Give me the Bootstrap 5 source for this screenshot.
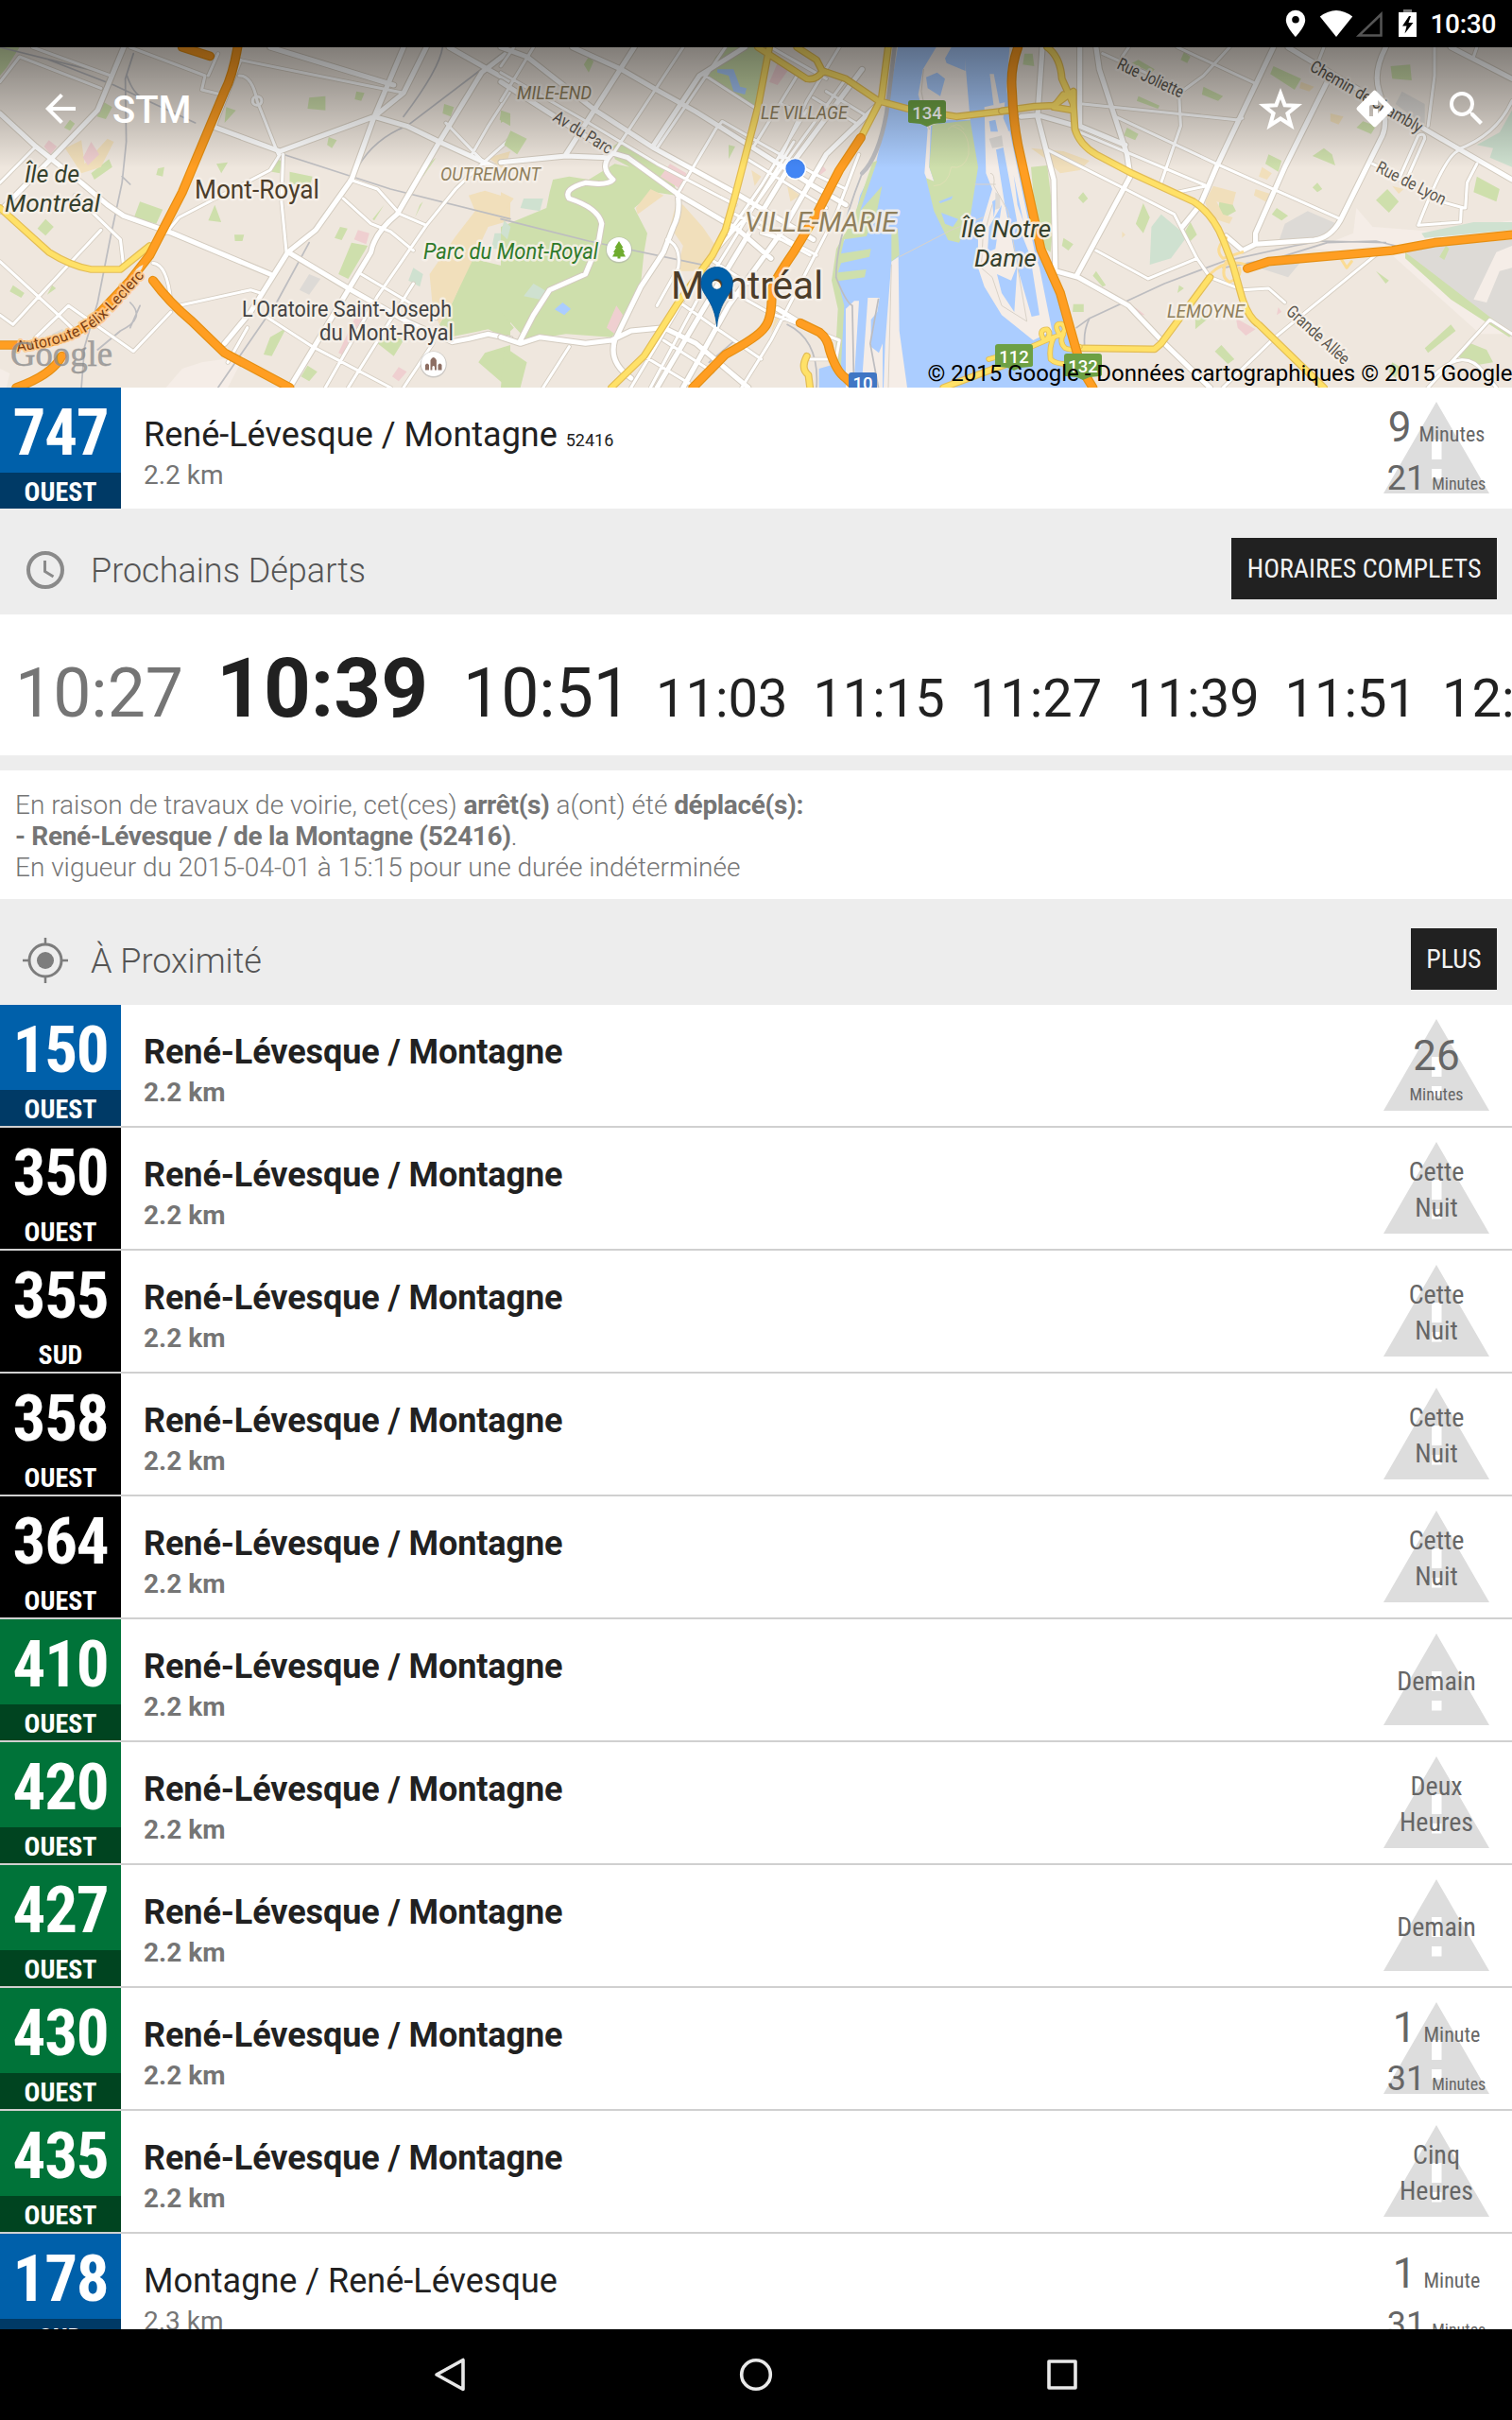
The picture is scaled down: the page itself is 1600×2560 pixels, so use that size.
<!DOCTYPE html>
<html lang="fr">
<head>
<meta charset="utf-8">
<meta name="viewport" content="width=device-width, initial-scale=1">
<title>STM</title>
<link href="https://cdn.jsdelivr.net/npm/bootstrap@5.3.0/dist/css/bootstrap.min.css" rel="stylesheet">
<style>
  body{font-family:Roboto,"Noto Sans",sans-serif;color:#212121;background:#fff;line-height:1}
  b{font-weight:700}
  .screen{width:1600px;height:2560px;overflow:hidden}
  .cond{font-family:"Roboto Condensed",Roboto,sans-serif;font-stretch:condensed}
  .statusbar{height:50px;background:#000;color:#fff;padding-right:17px}
  .clock{font-size:28px;font-weight:500;letter-spacing:-.3px;margin-left:13px;line-height:50px;padding-top:2px}
  .mapbox{height:360px}
  .mapbox>svg{display:block}
  .appbar{position:absolute;left:0;right:0;top:0;height:129px;padding-left:40px;padding-right:24px}
  .appbar h1{font-size:40px;font-weight:500;color:#fff;margin-left:31px;padding-top:5px}
  .fg{flex:1 1 0;min-height:0;overflow:hidden}
  .stop{height:128px}
  .nearby .stop{height:130px;border-bottom:2px solid #d0d0d0}
  .route{width:128px;height:128px;color:#fff;font-weight:700;text-align:center}
  .route .num{height:90px;font-size:69px;line-height:95px;letter-spacing:-1.200px}
  .route .dir{height:38px;font-size:28px;line-height:42px}
  .blue .num{background:#0060aa}.blue .dir{background:#003a66}
  .black .num,.black .dir{background:#000}
  .green .num{background:#007339}.green .dir{background:#004420}
  .stopname{font-size:36px;line-height:42px;height:42px;margin-top:29px}
  .fw-bold .stopname{letter-spacing:-.1px}
  .stopname small{font-size:18px;line-height:1}
  .dist{font-size:28px;line-height:33px;margin-top:5px;color:#757575}
  .eta{width:160px;height:128px;color:#666;text-align:center}
  .eta svg{position:absolute;left:24px;top:15px}
  .eta .txt{position:relative;height:128px;white-space:nowrap}
  .eta .ln{display:flex;justify-content:center;align-items:baseline}
  .big{font-size:44px}.mid{font-size:36px}.m22{font-size:22px}.m18{font-size:18px}.w28{font-size:28px;line-height:38px}
  .section{height:112px;background:#ededed;padding:15px 16px 0 24px}
  .section h2{font-size:36px;font-weight:300;color:#555;margin-left:24px;padding-top:6px}
  .section svg{position:relative;top:1px}
  .btn-dk{background:#212121;color:#f2f2f2;border-radius:0;border:0;font-size:28px;line-height:65px;height:65px;padding:0 16.500px}
  .times{height:149px;padding:35px 0 0 16px;white-space:nowrap;overflow:hidden}
  .times>div{flex:none}
  .t1{width:213px;font-size:71.500px;color:#757575}.t2{width:261px;font-size:87px;font-weight:700}
  .t3{width:204px;font-size:71.500px}.t4{width:166.400px;font-size:56px}
  .band{height:16px;background:#ededed}
  .notice{height:136px;padding:20px 16px;font-size:28px;line-height:33px;font-weight:300;color:#757575}
  .notice b{letter-spacing:-.35px}
  .navbtns{height:96px;background:#000;gap:276px}
  .land{fill:#f5ede7}.water{fill:#abcdff}.park{fill:#cedfac}.sand{fill:#f1dfbb}.teal{fill:#cfe1d0}.pink{fill:#efcfd0}.apt{fill:#dddad6}
  .net{fill:none;stroke-linejoin:round;stroke-linecap:round}
  .rail{stroke:#bdbdc0;stroke-width:5}
  .c1{stroke:#d6cec2;stroke-width:14}.f1{stroke:#fff;stroke-width:9}
  .c2{stroke:#d3cbbf;stroke-width:21}.f2{stroke:#fff;stroke-width:15}
  .cy{stroke:#e3bd55;stroke-width:23}.fy{stroke:#ffe168;stroke-width:16}
  .co{stroke:#e58f13;stroke-width:29}.fo{stroke:#ff9e22;stroke-width:22}
  .lab text{paint-order:stroke;stroke:#f7f1ea;stroke-opacity:.85;stroke-width:5px;stroke-linejoin:round}
  .it{font-style:italic}
  .dist-l{fill:#8f7f5c}.isl{fill:#35402c}.town{fill:#4c3d2a}.str{fill:#5c574e;font-size:18px}
</style>
</head>
<body>
<svg width="0" height="0" class="position-absolute"><symbol id="alert" viewBox="0 0 112 97"><path fill="#ddd" fill-rule="evenodd" d="M56 0L112 97H0ZM51 40V61H61.500V40ZM51 71V81.500H61.500V71Z"/></symbol></svg>
<div class="screen d-flex flex-column">
  <div class="statusbar d-flex justify-content-end align-items-center">
    <svg width="140" height="50" viewBox="1360 0 140 50" fill="#fff">
      <path fill-rule="evenodd" d="M1371 10.700a10.200 10.200 0 0 0-10.200 10.200c0 7.500 10.200 18 10.200 18s10.200-10.500 10.200-18A10.200 10.200 0 0 0 1371 10.700Zm0 6.300a3.800 3.800 0 1 1 0 7.600 3.800 3.800 0 0 1 0-7.600Z"/>
      <path d="M1396.800 17.500Q1414 4.500 1431.200 17.500L1414 39Z"/>
      <path fill="none" stroke="#555" stroke-width="2.500" d="M1438 37.500H1461.500V15Z"/>
      <path fill="#777" d="M1485 10h9v4h-9z"/><path d="M1480 13h19v26h-19z"/><path fill="#000" d="M1491 17L1484 27.500H1488.500L1486.500 35.500L1495.500 24H1490.500L1493 17Z"/>
    </svg>
    <div class="clock">10:30</div>
  </div>
  <div class="mapbox position-relative">
    <svg width="1600" height="360" viewBox="0 50 1600 360">
      <defs>
        <linearGradient id="shade" x1="0" y1="0" x2="0" y2="1"><stop offset="0" stop-color="#000" stop-opacity=".46"/><stop offset="1" stop-color="#000" stop-opacity="0"/></linearGradient>
        <path id="felix" d="M18 372Q82 364 110 338Q128 320 158 286"/>
        <g id="min1"><path d="M0 260L60 180L310 280M100 150L340 240M400 150L630 240L620 285L680 300M670 170L640 240M740 190L660 400M735 240Q775 240 790 320L855 490M735 190L1240 295M860 490L830 540L550 690L510 740M870 490L865 640L880 800M1075 570L1160 600L1230 680L1310 715M1055 630L1140 710L1200 735L1270 795M1568 440L1460 540L1400 600L1310 715L1160 940L1000 1230M1110 870L1340 1010M0 580L110 465M0 830L180 1000L230 1050M310 730L120 940L40 1030L0 1000M230 620L370 760L380 850M470 835Q515 840 525 960M550 970L770 920L800 930M110 1070L210 970L410 1115L525 990M810 1000L960 1100L1200 1230M1270 900L1070 1230M1330 1090L1240 1230M1370 390L1500 530M1568 290L1500 400L1450 490M700 1150L760 1040"/><circle cx="790" cy="320" r="14"/></g>
        <path id="maj1" d="M380 150L300 350L170 490L0 670M0 360L110 465L250 580L330 650L380 685L530 740L830 870M1240 150L1150 370L1080 570L970 730L885 800L770 990L690 1090M885 800L1070 915L1250 1020L1390 1085L1440 1075L1500 1060L1568 1075M1568 160L1480 230L1350 450L1220 680Q1150 740 1140 800L1070 920L960 1110L890 1230M650 400L860 480L1150 370L1250 400L1350 450L1520 530M1150 370L1240 295L1310 150M1380 150L1568 260M830 150L1210 270"/>
        <path id="yel1" d="M0 660L150 800Q220 845 280 855L370 855L460 780"/>
        <path id="ora1" d="M730 150Q715 240 690 290L560 610L460 810L400 890L300 1000Q220 1085 100 1095L0 1095M470 890Q520 960 590 1020L690 1120L890 1230M190 1130Q160 1190 50 1230M560 150L645 178"/>
        <path id="min2" d="M560 30L350 360M690 30L480 350M660 290L540 500M910 120L780 340M860 210L930 240M1060 130L760 560L640 700M1000 170L1120 245M960 190L1090 270M940 230L800 470L700 620M1100 370L1030 560L830 960L740 1110M660 290L680 265L790 330L960 430L1060 480M620 115L800 235M750 380L1000 540M720 560L950 690M700 800L820 870L1040 960L1030 1020H950M550 840L660 920L800 1020M500 960L650 1060M440 1010L600 1110M760 560L880 640L970 690M800 620L860 640M590 780L470 990L400 1110M900 330L620 800L460 1110M510 640Q555 660 545 730L480 850M210 980L130 1110M100 30L0 200M40 30L0 90M1040 30L940 200L860 380M0 110L270 270L480 400L720 530M830 30L1000 130M640 700L760 780"/>
        <path id="maj2" d="M0 30L80 60L290 230L470 350L700 480L830 560L960 640M0 140L340 365L390 380L550 500L730 610L830 700M220 30L370 100L470 160L600 235L700 300L960 470L1060 530M410 30L200 370M750 30L610 120L470 340M1110 100L880 420L640 830L480 1110M1150 220L1000 370L860 620L700 850L560 1110M0 395L200 375L330 380M340 370Q300 410 345 450Q330 470 260 460Q190 480 210 510Q300 540 310 590L300 650L260 750L150 800L100 880L60 960M0 950L60 970L120 950L260 970L340 960L400 930L500 920L600 970L760 1110M545 510Q550 560 530 600L500 680L430 790L350 960Q330 1030 400 1080M850 860L920 905"/>
        <path id="yel2" d="M825 30L790 220L720 500L690 610L650 690L545 840L440 1010L340 1110M790 30L940 130Q970 135 990 105L1060 130L1160 200M910 30L970 70L990 110M1190 30L1170 190L1110 310M1160 200L1250 225L1400 250L1568 230M1360 1110L1568 1030M940 1010Q920 1050 945 1070L950 1110"/>
        <path id="ora2" d="M1106 317L1040 420L970 560L900 680Q840 770 832 800Q835 890 810 920Q790 950 690 1005L590 1110M920 905L980 935Q1005 955 1010 990Q1030 1060 1060 1080L1100 1120"/>
        <path id="min3" d="M310 170L560 285L620 240L700 150M545 300L550 400L490 580M250 330L720 380L740 375M350 370L660 520L1040 695M540 150L780 265M240 420L400 490L630 590L540 610M140 475L380 600L530 680L600 820L640 880L740 920L820 915L870 960M290 795L450 885L600 820M1160 800L840 1070L680 1230M1400 480Q1360 500 1280 715L1410 705L1412 660L1425 660L1430 580L1460 520M1350 640L1420 660M1568 1060L1500 1015L1310 1230M1330 150V240L1310 400M1568 320Q1520 430 1400 475M1220 570L1280 430Q1300 420 1300 440L1240 580M990 150L975 190M390 150L370 180M1460 150L1450 180M1330 1190Q1420 1100 1480 1180L1520 1230M1140 520L1220 560"/>
        <path id="maj3" d="M240 150V400L380 460M290 150L300 220L385 490L395 560L230 875M125 150L110 370L160 570L165 860L235 880L390 970L500 1090L640 1230M835 150L660 530L610 650L555 720M1000 260L870 530L780 740V770M1180 150Q1140 230 1160 290Q1190 380 1170 430L1040 700Q1010 755 960 762L780 775L740 795L690 750M880 150L1300 410L1400 470L1568 570M1380 150L1568 250M60 370L110 365L230 400"/>
        <path id="yel3" d="M140 150Q180 180 185 250L220 330L225 410Q240 460 290 490L400 550L590 640Q650 680 680 760L710 840L740 950Q760 1010 790 1030L990 1230M0 352L100 338L160 335L220 290V350L160 340L190 300M250 1105L470 1108L490 1090L640 880"/>
        <path id="loops" d="M-40 1140L80 1105L160 1070Q145 1100 150 1140Q165 1155 200 1155M160 1070L190 1060Q175 1085 195 1105Q215 1115 240 1100M130 1080Q110 1045 140 1045Q155 1060 135 1080M180 1065Q155 1025 185 1028Q205 1045 180 1065"/>
        <path id="ora3" d="M50 150Q25 220 32 290Q35 380 50 460L120 790L180 930L245 1170L280 1230M755 852L820 830L1200 795L1330 770L1568 745"/>
      </defs>
      <rect y="50" width="1600" height="360" fill="#efe7de"/>
      <g transform="translate(860 50) scale(.33333)">
        <path class="water" d="M270 0H625L615 130L640 300L700 560L740 690L800 850L850 1020L870 1080H20V1020L90 1000L90 815L70 740L85 640L130 560L150 470L200 370L232 235L245 150Z"/>
        <path class="park" d="M190 365L205 360L150 520L220 440L200 540L170 600L100 610L90 655L185 640L180 665L90 685L80 715L170 705L165 730L80 742L100 820L90 1010L70 1010L80 830L60 740L75 640L130 540ZM250 590L270 575L275 660L250 680Z"/>
        <path class="land" d="M250 680L272 665L275 900L300 1080H225L230 940ZM175 795H212L205 840L185 865V950L210 970L222 940V1080H155ZM132 805H147L130 1080H105V830Z"/>
        <path class="land" d="M392 0H480L500 230H430L375 250L370 380L385 425H365L355 400L365 260L335 150L350 70Z"/>
        <path class="water" d="M360 95L395 80L420 100L405 155L365 130ZM420 35L440 0H485V75L425 50Z"/>
        <path class="park" d="M380 245L500 232L525 380L500 540L465 620L430 612L385 520L360 415L385 425L370 380Z"/>
        <path class="water" d="M400 490L445 472L440 482L405 495ZM408 525L462 545L445 570L420 560Z"/>
        <path class="net" stroke="#dedfb4" stroke-width="3" d="M440 250Q500 260 495 340Q480 390 440 380Q430 440 385 440M430 260Q460 230 480 260"/>
        <path class="land" d="M545 190L610 175L605 225L620 260L650 500L720 700L760 900L700 930L600 850L545 760L525 700V600L570 450L550 400ZM562 85L575 85L595 190H575ZM610 270L625 265L755 890L740 895Z"/>
        <path class="water" d="M560 235L580 230L588 268H565ZM582 325L605 318L650 560L690 660L720 850L695 855L650 700L610 500ZM585 720L630 740L650 690L640 840L600 780ZM560 570L600 500L580 640L555 650ZM570 490L585 480L575 540Z"/>
        <path class="apt" d="M560 290L600 280L605 315L570 320ZM580 460L595 470V510L580 515Z"/>
        <path class="net" stroke="#d9d2c8" stroke-width="3" d="M275 665L440 580L540 540M515 435H580M565 400Q580 400 575 440L620 520L680 870L600 820L570 730L535 700L540 610L570 500M352 70L345 140L370 260M240 1080L250 690"/>
      </g>
      <g transform="scale(.34438 .33333)">
        <path class="park" d="M0 150H60L20 215L0 240ZM320 325L345 340L325 378L298 370ZM215 380L230 392L215 415L197 405ZM950 310L1000 305V350L945 345ZM1095 290L1120 295L1110 320L1090 315ZM1010 435L1035 445L1020 470L1005 460ZM845 505L865 510L860 550L835 545ZM665 520L700 515L680 550ZM485 535L505 530L500 560L480 555ZM890 545L960 560L950 600L890 580ZM430 640L500 665L480 710L412 690ZM140 695L165 720L140 748L115 725ZM660 650L680 705L640 700ZM1045 720L1068 725L1050 762L1028 755ZM1180 650L1150 700L1145 695ZM1080 770L1130 780L1070 885L1040 870ZM720 745L750 745L745 765H722ZM40 905L75 930L65 945L30 925ZM160 905L172 915L145 935ZM620 965L670 1005ZM945 1160L975 1180L950 1210L925 1195ZM830 1070L880 1040L860 1080L835 1130L810 1125ZM695 340L725 350L690 390ZM1300 640L1275 690L1290 650ZM1340 500L1300 560L1280 550ZM335 505L345 530L290 570L280 550ZM1450 820L1568 850V1080L1500 1045L1380 1070L1350 1030L1390 960ZM1490 1120L1568 1095V1230H1560L1470 1150ZM1200 1060L1240 1080L1210 1130L1160 1090ZM1540 350L1568 360V400L1535 380ZM1365 330L1395 340L1385 370L1360 360Z"/>
        <path class="sand" d="M200 470L250 445L260 520L330 440L350 450L310 530L250 550ZM1440 620L1490 605L1568 630V700L1500 720L1450 830L1390 960L1350 1030L1330 980L1320 870L1400 750L1460 670ZM1568 480L1500 500L1550 540Z"/>
        <path class="pink" d="M150 445L175 465L155 490L135 465ZM280 450L305 490L270 525L255 500ZM1100 730L1135 740L1125 775L1088 760ZM1090 1010L1130 1000L1060 1130L1040 1120ZM1225 1165L1250 1180L1225 1210L1205 1195Z"/>
        <path class="apt" d="M950 870L985 885L950 935L920 920ZM160 1060L190 1045L230 1060L150 1080Z"/>
        <path class="teal" d="M1270 850L1300 870L1290 910L1255 890ZM1520 740L1568 740V790L1510 790Z"/>
        <path class="land" d="M620 1150L750 1130L700 1230H510L560 1170ZM0 1170L30 1185L20 1230H0Z"/>
        <path class="net rail" d="M410 170L385 250L388 450L375 580L340 750L300 960L260 1100L250 1230M870 490L1200 600L1568 695M950 770L850 960L670 1230M150 190L350 270L600 390M0 150L330 235M390 240Q410 300 440 310M375 560L400 585M1568 150L1250 400Q1150 440 1100 530M1360 150Q1350 220 1240 370M400 960Q450 1010 370 1050L300 1110M430 970L400 1040"/>
        <use href="#min1" class="net c1"/><use href="#maj1" class="net c2"/><use href="#min1" class="net f1"/><use href="#maj1" class="net f2"/>
        <use href="#yel1" class="net cy"/><use href="#yel1" class="net fy"/>
      </g>
      <g transform="translate(530 40) scale(.34438 .33333)">
        <path class="park" d="M160 450L210 440L270 450L350 400L480 430L540 500L470 490L410 540L450 620L440 680L430 780L380 900L340 950L200 940L80 960L0 870V600L140 540L150 490ZM690 30L825 30L790 225L630 120L660 60ZM345 345L370 325L520 420L540 490L450 440L350 385ZM0 870L40 920L0 960ZM30 295L80 320L50 370L10 340ZM10 980L80 1030L60 1110H0ZM700 340L720 345L700 385ZM680 370L660 395ZM270 60L285 75L270 110L255 85ZM0 230L30 250L0 270Z"/>
        <path class="sand" d="M460 480L560 530L620 600L660 660L600 740L540 740L560 660L520 600L540 520L500 500L420 560L415 540ZM0 490L40 510L0 560ZM770 420L800 440L780 470ZM850 370L870 385L850 420ZM880 470L920 500L890 520ZM850 860L860 880L830 940Z"/>
        <path class="pink" d="M520 400L570 430L560 485L490 440ZM850 80L885 100L850 150L825 140ZM985 400L1000 420L975 440ZM355 850L375 880L350 940L325 920Z"/>
        <path class="teal" d="M70 510H130L120 550L60 540ZM100 780L150 810L120 830L70 820ZM10 580L30 600L20 640L0 620Z"/>
        <path class="water" d="M665 100H715L735 155L755 160L750 180L715 170L700 120L665 110ZM190 840L215 860L195 880L165 862Z"/>
        <path class="net rail" d="M0 575L270 645L640 725M880 910Q980 960 970 1110M720 960L640 1030M1030 760Q1060 840 1080 850L1085 1110M1160 830L1135 970L1160 1110"/>
        <path class="net" stroke="#bdbdc0" stroke-width="13" d="M1210 30L1185 240Q1160 380 1110 430"/>
        <path class="net rail" d="M1110 430Q1030 640 1030 760"/>
        <use href="#min2" class="net c1"/><use href="#maj2" class="net c2"/><use href="#min2" class="net f1"/><use href="#maj2" class="net f2"/>
        <use href="#yel2" class="net cy"/><use href="#yel2" class="net fy"/>
      </g>
      <g transform="translate(1060) scale(.34438 .33333)">
        <path class="land" d="M1090 660L1140 720L1330 735L1568 700V1060H1470L1200 810L960 790L1080 740Z"/>
        <path class="apt" d="M1230 790L1568 760V780L1520 800L1450 950L1490 960L1530 860L1568 850V1070L1380 930ZM940 670L1030 710L980 760L850 770L870 710ZM790 850L920 830L880 880ZM1230 290L1300 330V400L1210 330ZM920 1150L960 1180L940 1190Z"/>
        <path class="park" d="M90 530L140 525L160 700L150 800L120 780L100 650ZM70 170H95L100 210L65 205ZM560 165L580 180L570 200L550 190ZM420 190L470 220L460 230L400 200ZM835 210L920 250L900 285L825 235ZM420 305L485 335L480 345L415 320ZM620 275L680 305L665 320L615 300ZM385 405L420 425L410 445L375 430ZM990 470L1015 490L1025 525L955 495ZM820 490L860 510L850 545L810 520ZM1195 210L1255 205L1260 255L1200 250ZM1110 385L1150 400L1135 425L1090 405ZM970 580L985 600L970 610L955 595ZM250 610L265 630L250 645L235 628ZM670 630L705 640L720 670L685 690L665 670ZM435 645L455 690L435 740L412 710ZM845 660L880 685L860 700L830 680ZM1185 600L1220 640L1190 675L1150 635ZM1460 560L1530 600L1520 640L1450 610ZM580 705L600 745L580 765L560 740ZM190 755L220 775L205 795L185 780ZM220 965H252V990L218 990ZM545 905L560 915L540 930ZM595 1000L635 1010L595 1045ZM675 1095L715 1140L695 1155L655 1115ZM1380 1030L1395 1050L1310 1120L1300 1105ZM1430 1085L1490 1110L1510 1150L1450 1160L1400 1130ZM1150 860L1190 890L1180 900ZM1240 800L1568 1060L1560 1070L1380 950L1240 820ZM1200 1150L1225 1165L1210 1200L1190 1180ZM1365 780L1375 790L1360 825L1345 815ZM290 860L320 905L310 910L280 875Z"/>
        <path class="sand" d="M90 470L190 480L270 510L240 540L180 550L130 500ZM800 530L830 550L815 570L790 560ZM650 590L720 610L710 650L660 640L680 680L710 690L700 710L640 690L625 640ZM780 600L840 620L830 650L775 620ZM1010 360L1050 370L1035 395L1010 385ZM920 260L960 275L945 290L915 280ZM1200 590L1235 600L1220 615ZM370 735L380 745L370 755Z"/>
        <path class="teal" d="M490 680L570 750L520 820L455 840L460 720ZM1568 350V530L1500 500L1510 470L1460 460L1530 420ZM1290 740L1450 705L1568 705V730L1300 755Z"/>
        <path class="pink" d="M720 1010L780 1045L750 1065L725 1040ZM850 975L860 990L845 1000ZM410 975L440 1000L420 1000Z"/>
        <path class="net rail" d="M230 1040L270 1010L500 900L680 830L900 780L980 765L1180 770M680 850L860 815L1000 770L1150 765L1210 780M270 1010Q250 1050 255 1100"/>
        <use href="#min3" class="net c1"/><use href="#maj3" class="net c2"/><use href="#min3" class="net f1"/><use href="#maj3" class="net f2"/>
        <path class="net" stroke="#fbdc94" stroke-width="9" d="M690 755Q650 790 680 820L740 800M640 870Q690 820 750 840M690 830Q670 880 700 895Q740 880 730 850M1045 825L1060 850L1075 830"/>
        <use href="#yel3" class="net cy"/><use href="#yel3" class="net fy"/>
        <use href="#loops" class="net cy" style="stroke-width:17"/><use href="#loops" class="net fy" style="stroke-width:12"/>
      </g>
      <g transform="scale(.34438 .33333)"><use href="#ora1" class="net co"/><use href="#ora1" class="net fo"/><path d="M410 875Q415 850 440 840Q435 865 410 875Z" fill="#efe7de"/></g>
      <g transform="translate(530 40) scale(.34438 .33333)"><use href="#ora2" class="net co"/><use href="#ora2" class="net fo"/></g>
      <g transform="translate(1060) scale(.34438 .33333)"><use href="#ora3" class="net co"/><use href="#ora3" class="net fo"/></g>

      <g class="lab" font-family="Roboto,sans-serif">
        <g class="it">
          <text class="isl" x="26" y="193" font-size="26" textLength="58" lengthAdjust="spacingAndGlyphs">Île de</text>
          <text class="isl" x="5" y="224" font-size="26" textLength="101" lengthAdjust="spacingAndGlyphs">Montréal</text>
          <text class="isl" x="1017" y="251" font-size="26" textLength="95" lengthAdjust="spacingAndGlyphs">Île Notre</text>
          <text class="isl" x="1031" y="282" font-size="26" textLength="66" lengthAdjust="spacingAndGlyphs">Dame</text>
          <text class="dist-l" x="466" y="191" font-size="20" textLength="106" lengthAdjust="spacingAndGlyphs">OUTREMONT</text>
          <text class="dist-l" x="547" y="105" font-size="20" textLength="79" lengthAdjust="spacingAndGlyphs">MILE-END</text>
          <text class="dist-l" x="805" y="126" font-size="20" textLength="92" lengthAdjust="spacingAndGlyphs">LE VILLAGE</text>
          <text class="dist-l" x="788" y="245" font-size="29" textLength="161" lengthAdjust="spacingAndGlyphs">VILLE-MARIE</text>
          <text class="dist-l" x="1235" y="336" font-size="20" textLength="82" lengthAdjust="spacingAndGlyphs">LEMOYNE</text>
          <text fill="#2f7a2a" x="448" y="274" font-size="23.500" textLength="185" lengthAdjust="spacingAndGlyphs">Parc du Mont-Royal</text>
        </g>
        <text class="town" x="206" y="210" font-size="27" textLength="132" lengthAdjust="spacingAndGlyphs">Mont-Royal</text>
        <text class="town" x="710" y="315.500" font-size="41" textLength="161" lengthAdjust="spacingAndGlyphs">Montréal</text>
        <text fill="#444" x="256" y="334.500" font-size="23.500" textLength="222" lengthAdjust="spacingAndGlyphs">L'Oratoire Saint-Joseph</text>
        <text fill="#444" x="338" y="360" font-size="23.500" textLength="142" lengthAdjust="spacingAndGlyphs">du Mont-Royal</text>
        <text class="str" transform="translate(584 127) rotate(31.500)" textLength="70" lengthAdjust="spacingAndGlyphs">Av du Parc</text>
        <text class="str" transform="translate(1181 72) rotate(25)" textLength="75" lengthAdjust="spacingAndGlyphs">Rue Joliette</text>
        <text class="str" transform="translate(1385 74) rotate(30)" textLength="134" lengthAdjust="spacingAndGlyphs">Chemin de Chambly</text>
        <text class="str" transform="translate(1455 181) rotate(27)" textLength="80" lengthAdjust="spacingAndGlyphs">Rue de Lyon</text>
        <text class="str" transform="translate(1360 331) rotate(42)" textLength="83" lengthAdjust="spacingAndGlyphs">Grande Allée</text>
        <text font-size="16" fill="#7a3d12" style="stroke:#ffc98a;stroke-width:4px"><textPath href="#felix">Autoroute Félix-Leclerc</textPath></text>
      </g>
      <circle cx="655" cy="264.500" r="14" fill="#aaa" opacity=".5"/><circle cx="655" cy="264" r="13" fill="#fff"/>
      <path fill="#6fac2e" d="M655 255L659.500 262H658L661 267H659.500L662 271.500H656.500V273.500H653.500V271.500H648L650.500 267H649L652 262H650.500Z"/>
      <circle cx="458.700" cy="385.500" r="14" fill="#aaa" opacity=".5"/><circle cx="458.700" cy="385" r="13" fill="#fff"/>
      <path fill="#8d6e63" d="M450 391.500V386q2-3 4 0V391.500ZM463.500 391.500V386q2-3 4 0V391.500ZM455.500 391.500V381q3.200-6 6.400 0V391.500H460V388q-1.300-2-2.600 0V391.500Z"/>
      <g fill="#6da044" stroke="none"><path d="M964 106h34q3 0 3 3v19q0 2-3 2l-10 1-7 3-7-3-10-1q-3 0-3-2v-19q0-3 3-3Z"/><path d="M1056 364h34q3 0 3 3v19q0 2-3 2l-10 1-7 3-7-3-10-1q-3 0-3-2v-19q0-3 3-3Z"/><path d="M1129 374h34q3 0 3 3v19q0 2-3 2l-10 1-7 3-7-3-10-1q-3 0-3-2v-19q0-3 3-3Z"/></g>
      <rect x="898" y="394" width="30" height="24" rx="3" fill="#3f76c4"/>
      <g fill="#fff" font-family="Roboto,sans-serif" font-weight="500" font-size="18.500" text-anchor="middle"><text x="981" y="126">134</text><text x="1073" y="384">112</text><text x="1146" y="394">132</text><text x="913" y="412">10</text></g>
      <circle cx="841.600" cy="178.500" r="11" fill="#4285f4" stroke="#fff" stroke-width="1.500"/>
      <path fill-rule="evenodd" fill="#0060aa" stroke="#00508f" stroke-width=".8" d="M758.600 282.500a16.700 16.700 0 0 0-16.700 17c0 13 14 17 16.700 46c2.700-29 16.700-33 16.700-46a16.700 16.700 0 0 0-16.700-17Zm0 12.500a5.600 5.600 0 1 1 0 11.200 5.600 5.600 0 0 1 0-11.200Z"/>
      <text x="11" y="387" font-family="'Liberation Serif',serif" font-size="37" fill="#8a8a8a" fill-opacity=".75" stroke="#8a8a8a" stroke-opacity=".5" stroke-width=".8" textLength="108" lengthAdjust="spacingAndGlyphs">Google</text>
      <text x="981.500" y="402.500" font-family="Roboto,sans-serif" font-size="24" fill="#000" textLength="619" lengthAdjust="spacingAndGlyphs">© 2015 Google - Données cartographiques © 2015 Google</text>
      <rect y="50" width="1600" height="128" fill="url(#shade)"/>
    </svg>
    <div class="appbar d-flex align-items-center">
      <svg width="48" height="48" viewBox="0 0 24 24" fill="#fff"><path d="M20 11H7.830l5.590-5.590L12 4l-8 8 8 8 1.410-1.410L7.830 13H20v-2z"/></svg>
      <h1 class="mb-0 me-auto">STM</h1>
      <svg width="48" height="48" viewBox="1332 90 48 48"><path fill="none" stroke="#fff" stroke-width="4.200" stroke-miterlimit="10" d="M1356 98L1360.600 110.300L1373.500 110.800L1363.500 119L1367 131.500L1356 124.400L1345 131.500L1348.500 119L1338.500 110.800L1351.400 110.300Z"/></svg>
      <svg style="margin-left:52px" width="48" height="48" viewBox="1430 90 48 48" fill="#fff"><path fill-rule="evenodd" d="M1452.200 95.200q1.500-1.400 3 0L1472.300 112.500q1.400 1.500 0 3L1455.200 132.800q-1.500 1.400-3 0L1435.100 115.500q-1.400-1.500 0-3ZM1448 122H1452V114H1457V119L1464 112L1457 105V110H1450Q1448 110 1448 112Z"/></svg>
      <svg style="margin-left:49px" width="48" height="48" viewBox="0 0 24 24" fill="#fff"><path d="M15.500 14h-.79l-.28-.27A6.471 6.471 0 0 0 16 9.500 6.500 6.500 0 1 0 9.500 16c1.610 0 3.090-.59 4.230-1.570l.27.28v.79l5 4.990L20.490 19l-4.990-5zm-6 0C7.010 14 5 11.990 5 9.500S7.010 5 9.500 5 14 7.010 14 9.500 11.990 14 9.500 14z"/></svg>
    </div>
  </div>

  <main class="fg bg-white">
    <div id="current"></div>
    <div class="section d-flex align-items-center">
      <svg width="48" height="48" viewBox="0 0 48 48" fill="none" stroke="#8a8a8a"><circle cx="24" cy="24" r="18" stroke-width="4"/><path stroke-width="3" d="M23.500 14V25.500L32.500 31"/></svg>
      <h2 class="mb-0 me-auto">Prochains Départs</h2>
      <button class="btn btn-dk cond">HORAIRES COMPLETS</button>
    </div>
    <div class="times d-flex align-items-baseline">
      <div class="t1">10:27</div><div class="t2">10:39</div><div class="t3">10:51</div><div class="t4">11:03</div><div class="t4">11:15</div><div class="t4">11:27</div><div class="t4">11:39</div><div class="t4">11:51</div><div class="t4">12:03</div>
    </div>
    <div class="band"></div>
    <div class="notice">En raison de travaux de voirie, cet(ces) <b>arrêt(s)</b> a(ont) été <b>déplacé(s):</b><br><b>- René-Lévesque / de la Montagne (52416)</b>.<br>En vigueur du 2015-04-01 à 15:15 pour une durée indéterminée</div>
    <div class="section d-flex align-items-center">
      <svg width="48" height="48" viewBox="0 0 48 48" fill="none" stroke="#7d7d7d"><circle cx="24" cy="24" r="17" stroke-width="3"/><circle cx="24" cy="24" r="9" fill="#7d7d7d" stroke="none"/><path stroke-width="2.500" d="M24 0V6M24 42V48M0 24H6M42 24H48"/></svg>
      <h2 class="mb-0 me-auto">À Proximité</h2>
      <button class="btn btn-dk cond">PLUS</button>
    </div>
    <div id="nearby" class="nearby"></div>
  </main>

  <nav class="navbtns d-flex justify-content-center align-items-center">
    <svg width="48" height="48" viewBox="0 0 48 48" fill="none" stroke="#e8e8e8" stroke-width="3.600" stroke-linejoin="round"><path d="M38 8.500V39.500L10 24Z"/></svg>
    <svg width="48" height="48" viewBox="0 0 48 48" fill="none" stroke="#e8e8e8" stroke-width="3.600"><circle cx="24" cy="24" r="15.300"/></svg>
    <svg width="48" height="48" viewBox="0 0 48 48" fill="none" stroke="#e8e8e8" stroke-width="3.600" stroke-linejoin="round"><rect x="10" y="10" width="28" height="28"/></svg>
  </nav>
</div>
<script src="https://cdn.jsdelivr.net/npm/bootstrap@5.3.0/dist/js/bootstrap.bundle.min.js"></script>
<script>
  const eta = {
    pair: (a, ua, b, ub) => `<div class="ln" style="padding-top:20px;gap:8px"><span class="big">${a}</span><span class="m22 cond">${ua}</span></div><div class="ln" style="padding-top:14px;gap:7px"><span class="mid">${b}</span><span class="m18 cond">${ub}</span></div>`,
    one: (a, u) => `<div class="ln" style="padding-top:32px"><span class="big">${a}</span></div><div class="ln" style="padding-top:10px"><span class="m18 cond">${u}</span></div>`,
    words: (...w) => `<div class="w28 cond d-flex flex-column justify-content-center h-100" style="padding-top:3px">${w.map(x => `<div>${x}</div>`).join('')}</div>`
  };
  const row = (color, num, dir, name, dist, txt, bold = true, warn = true, code = '') => `
    <div class="stop d-flex bg-white">
      <div class="route cond ${color}"><div class="num">${num}</div><div class="dir">${dir}</div></div>
      <div class="flex-grow-1 ${bold ? 'fw-bold' : ''}" style="padding-left:24px"><div class="stopname">${name}${code ? ` <small class="fw-normal">${code}</small>` : ''}</div><div class="dist">${dist}</div></div>
      <div class="eta position-relative">${warn ? '<svg width="112" height="97"><use href="#alert"/></svg>' : ''}<div class="txt">${txt}</div></div>
    </div>`;
  const rl = 'René-Lévesque / Montagne';
  document.getElementById('current').innerHTML = row('blue', 747, 'OUEST', rl, '2.2 km', eta.pair(9, 'Minutes', 21, 'Minutes'), false, true, '52416');
  document.getElementById('nearby').innerHTML = [
    row('blue', 150, 'OUEST', rl, '2.2 km', eta.one(26, 'Minutes')),
    row('black', 350, 'OUEST', rl, '2.2 km', eta.words('Cette', 'Nuit')),
    row('black', 355, 'SUD', rl, '2.2 km', eta.words('Cette', 'Nuit')),
    row('black', 358, 'OUEST', rl, '2.2 km', eta.words('Cette', 'Nuit')),
    row('black', 364, 'OUEST', rl, '2.2 km', eta.words('Cette', 'Nuit')),
    row('green', 410, 'OUEST', rl, '2.2 km', eta.words('Demain')),
    row('green', 420, 'OUEST', rl, '2.2 km', eta.words('Deux', 'Heures')),
    row('green', 427, 'OUEST', rl, '2.2 km', eta.words('Demain')),
    row('green', 430, 'OUEST', rl, '2.2 km', eta.pair(1, 'Minute', 31, 'Minutes')),
    row('green', 435, 'OUEST', rl, '2.2 km', eta.words('Cinq', 'Heures')),
    row('blue', 178, 'SUD', 'Montagne / René-Lévesque', '2.3 km', eta.pair(1, 'Minute', 31, 'Minutes'), false, false)
  ].join('');
</script>
</body>
</html>
